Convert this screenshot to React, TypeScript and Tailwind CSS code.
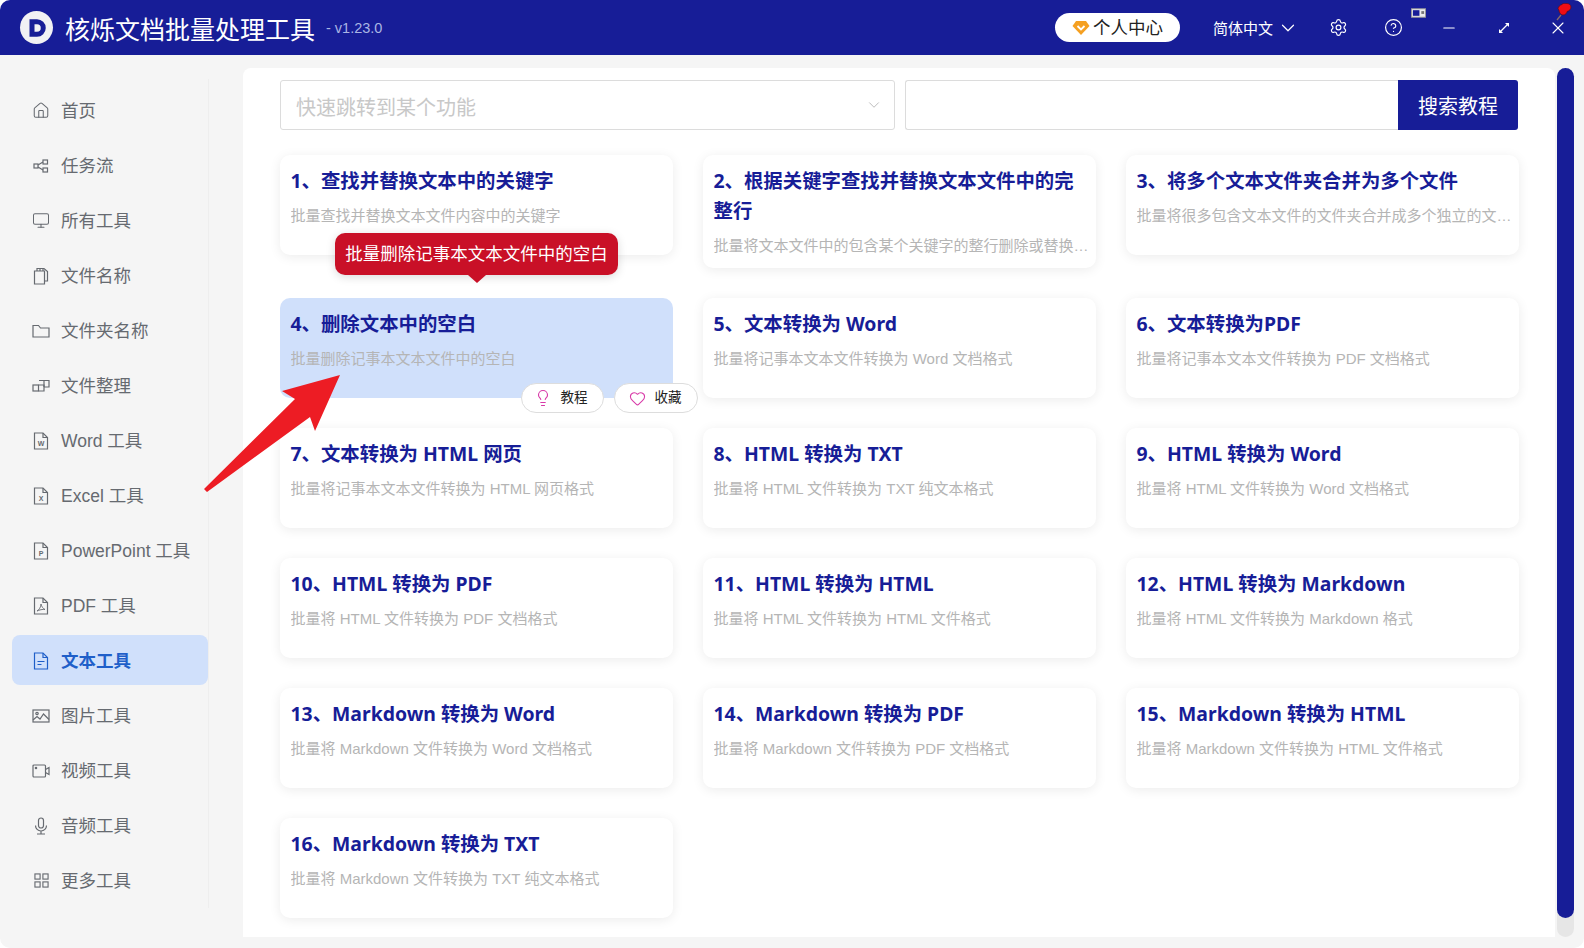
import { ChevronDown, CircleHelp, Heart, House, Lightbulb, Minus, Monitor, Settings, X } from "lucide-react";
import type { ReactNode } from "react";

const font = "font-['Liberation_Sans','Noto_Sans_CJK_SC',sans-serif]";

const DocIcon = ({ children }: { children?: ReactNode }) => (
  <svg viewBox="0 0 16 18" className="h-[18px] w-4" fill="none" stroke="currentColor" strokeWidth="1.2">
    <path d="M1.500 1h8.500l4.500 4.500V17h-13z" />
    <path d="M10 1v4.500h4.500" />
    {children}
  </svg>
);

const Letter = ({ t }: { t: string }) => (
  <text x="8" y="14" fontSize="7" fontWeight="700" textAnchor="middle" fill="currentColor" stroke="none" fontFamily="Liberation Sans">
    {t}
  </text>
);

const svgProps = { fill: "none", stroke: "currentColor", strokeWidth: 1.2 };

const navItems: { label: string; icon: ReactNode; active?: boolean }[] = [
  { label: "首页", icon: <House size={19} strokeWidth={1.4} /> },
  {
    label: "任务流",
    icon: (
      <svg viewBox="0 0 16 14" className="h-[14px] w-4" {...svgProps}>
        <rect x="1" y="5" width="4" height="4" />
        <rect x="10" y="1" width="4.500" height="4" />
        <rect x="10" y="9" width="4.500" height="4" />
        <path d="M5 6l5-3M5 8l5 3" />
      </svg>
    ),
  },
  { label: "所有工具", icon: <Monitor size={19} strokeWidth={1.4} /> },
  {
    label: "文件名称",
    icon: (
      <svg viewBox="0 0 16 18" className="h-[18px] w-4" {...svgProps}>
        <path d="M1.500 4h10v13h-10z" />
        <path d="M4 4V1.500h7l3.500 3V14h-3" />
        <path d="M7 1.500V4M10 1.500V4" />
      </svg>
    ),
  },
  {
    label: "文件夹名称",
    icon: (
      <svg viewBox="0 0 18 14" className="h-[14px] w-[18px]" {...svgProps}>
        <path d="M1 1.500h5.500L8.500 4H17v9H1z" />
      </svg>
    ),
  },
  {
    label: "文件整理",
    icon: (
      <svg viewBox="0 0 18 14" className="h-[14px] w-[18px]" {...svgProps}>
        <path d="M7 1.500h10v6.500h-5" />
        <path d="M12 1.500V8" />
        <rect x="1" y="6" width="5.500" height="6" />
        <path d="M6.500 6H12v6H6.500" />
      </svg>
    ),
  },
  { label: "Word 工具", icon: <DocIcon><Letter t="W" /></DocIcon> },
  { label: "Excel 工具", icon: <DocIcon><Letter t="X" /></DocIcon> },
  { label: "PowerPoint 工具", icon: <DocIcon><Letter t="P" /></DocIcon> },
  {
    label: "PDF 工具",
    icon: (
      <DocIcon>
        <path d="M8 7c0 3-2 6-4 7 2-1 6-2 8-1.500-2-1-3.500-3-4-5.500z" strokeWidth="0.9" />
      </DocIcon>
    ),
  },
  {
    label: "文本工具",
    active: true,
    icon: (
      <DocIcon>
        <path d="M4.500 9.500h7M4.500 12.500h4" />
      </DocIcon>
    ),
  },
  {
    label: "图片工具",
    icon: (
      <svg viewBox="0 0 18 14" className="h-[14px] w-[18px]" {...svgProps}>
        <rect x="1" y="1" width="16" height="12" />
        <circle cx="5" cy="4.500" r="1.200" />
        <path d="M1 11l4-3.500 3 2.500 3.500-5L17 10.500" />
      </svg>
    ),
  },
  {
    label: "视频工具",
    icon: (
      <svg viewBox="0 0 18 14" className="h-[14px] w-[18px]" {...svgProps}>
        <rect x="1" y="1" width="12.500" height="12" rx="1" />
        <path d="M13.500 5.500L17 3.500v7l-3.500-2" />
        <circle cx="4" cy="4" r="0.700" fill="currentColor" />
      </svg>
    ),
  },
  {
    label: "音频工具",
    icon: (
      <svg viewBox="0 0 14 18" className="h-[18px] w-[14px]" {...svgProps}>
        <rect x="4.500" y="1" width="5" height="10" rx="2.500" />
        <path d="M1.500 8.500a5.500 5.500 0 0 0 11 0M7 14v3M3 17h8" />
      </svg>
    ),
  },
  {
    label: "更多工具",
    icon: (
      <svg viewBox="0 0 16 16" className="h-[15px] w-[15px]" {...svgProps}>
        <rect x="1" y="1" width="5.500" height="5.500" />
        <rect x="9.500" y="1" width="5.500" height="5.500" />
        <rect x="1" y="9.500" width="5.500" height="5.500" />
        <rect x="9.500" y="9.500" width="5.500" height="5.500" />
      </svg>
    ),
  },
];

const cards = [
  ["1、查找并替换文本中的关键字", "批量查找并替换文本文件内容中的关键字"],
  ["2、根据关键字查找并替换文本文件中的完整行", "批量将文本文件中的包含某个关键字的整行删除或替换成新的内容的功能"],
  ["3、将多个文本文件夹合并为多个文件", "批量将很多包含文本文件的文件夹合并成多个独立的文本文件的功能"],
  ["4、删除文本中的空白", "批量删除记事本文本文件中的空白"],
  ["5、文本转换为 Word", "批量将记事本文本文件转换为 Word 文档格式"],
  ["6、文本转换为PDF", "批量将记事本文本文件转换为 PDF 文档格式"],
  ["7、文本转换为 HTML 网页", "批量将记事本文本文件转换为 HTML 网页格式"],
  ["8、HTML 转换为 TXT", "批量将 HTML 文件转换为 TXT 纯文本格式"],
  ["9、HTML 转换为 Word", "批量将 HTML 文件转换为 Word 文档格式"],
  ["10、HTML 转换为 PDF", "批量将 HTML 文件转换为 PDF 文档格式"],
  ["11、HTML 转换为 HTML", "批量将 HTML 文件转换为 HTML 文件格式"],
  ["12、HTML 转换为 Markdown", "批量将 HTML 文件转换为 Markdown 格式"],
  ["13、Markdown 转换为 Word", "批量将 Markdown 文件转换为 Word 文档格式"],
  ["14、Markdown 转换为 PDF", "批量将 Markdown 文件转换为 PDF 文档格式"],
  ["15、Markdown 转换为 HTML", "批量将 Markdown 文件转换为 HTML 文件格式"],
  ["16、Markdown 转换为 TXT", "批量将 Markdown 文件转换为 TXT 纯文本格式"],
];

const Card = ({ title, desc, active }: { title: string; desc: string; active: boolean }) => (
  <div className={`relative min-h-[100px] rounded-[10px] pt-[11px] pr-[6px] pb-[11px] pl-[10.5px] ${active ? "bg-[#d0e0fb]" : "bg-white shadow-[0_2px_12px_rgba(0,0,0,0.08)]"}`}>
    <div className="font-['Noto_Sans','Noto_Sans_CJK_SC',sans-serif] text-[19.4px] font-bold leading-[30px] text-[#171d97]">{title}</div>
    <div className="mt-[9px] truncate text-[15px] leading-[22px] text-[#b5b5b5]">{desc}</div>
    {active && (
      <>
        <div className="absolute -top-[65px] left-[55px] flex h-[42px] w-[283px] items-center justify-center rounded-[10px] bg-[#c91027] pt-[1px] text-[17.5px] whitespace-nowrap text-white shadow-[0_2px_10px_rgba(0,0,0,0.15)]">
          批量删除记事本文本文件中的空白
          <span className="absolute -bottom-[8px] left-1/2 -ml-[9px] h-0 w-0 border-x-[9px] border-t-[8px] border-x-transparent border-t-[#c91027]" />
        </div>
        <div className="absolute -bottom-[15px] -right-[25px] flex gap-[10px]">
          <div className="flex h-[30px] w-[83px] items-center justify-center gap-[9px] rounded-full border border-[#dddddd] bg-white pr-[4px] text-[13.5px] text-[#222222]">
            <Lightbulb size={18} strokeWidth={1.5} className="text-[#d83aa8]" />
            <span className="pt-[1px]">教程</span>
          </div>
          <div className="flex h-[30px] w-[84px] items-center justify-center gap-[9px] rounded-full border border-[#dddddd] bg-white pr-[2px] text-[13.5px] text-[#222222]">
            <Heart size={17} strokeWidth={1.5} className="text-[#d83aa8]" />
            <span className="pt-[1px]">收藏</span>
          </div>
        </div>
      </>
    )}
  </div>
);

export default function App() {
  return (
    <div className={`${font} relative flex h-[948px] w-[1584px] flex-col overflow-hidden rounded-[10px] bg-[#f5f5f5]`}>
      <header className="relative flex h-[55px] shrink-0 items-center bg-[#171d97] text-white">
        <div className="ml-5 flex h-[33px] w-[33px] items-center justify-center rounded-full bg-[#f1f1f4]">
          <svg viewBox="0 0 16 16" className="h-[20px] w-[20px]">
            <path d="M2 1h6a7 7 0 0 1 0 14H2zM6 5v6h2a3 3 0 0 0 0-6z" fill="#171d97" fillRule="evenodd" />
          </svg>
        </div>
        <div className="ml-3 pt-[5px] text-[25px] leading-none whitespace-nowrap">核烁文档批量处理工具</div>
        <div className="ml-[11px] pt-[3px] text-[14.5px] text-[#aab6e4]">- v1.23.0</div>
        <div className="ml-auto flex h-[29px] w-[125px] items-center justify-center gap-[3px] rounded-full bg-white text-[17.5px] text-[#222222]">
          <svg viewBox="0 0 18 16" className="h-[16px] w-[18px]">
            <path d="M4 1h10l3.500 5L9 15 .5 6z" fill="#f5a021" />
            <path d="M5.500 6L9 9.500 12.500 6" fill="none" stroke="#fff" strokeWidth="1.800" />
          </svg>
          <span className="pt-[2px]">个人中心</span>
        </div>
        <div className="ml-[33px] pt-[3px] text-[15px] whitespace-nowrap">简体中文</div>
        <ChevronDown size={22} strokeWidth={1.3} className="ml-[4px]" />
        <Settings size={19} strokeWidth={1.5} className="ml-[30px]" />
        <CircleHelp size={19} strokeWidth={1.5} className="ml-[36px]" />
        <Minus size={18} strokeWidth={1.4} className="ml-[37px]" />
        <svg viewBox="0 0 14 14" className="ml-[39px] h-[14px] w-[14px]" fill="none" stroke="#fff" strokeWidth="1.200">
          <path d="M3 11l8-8" />
          <path d="M8 2h4v4M2 8v4h4" fill="#fff" stroke="none" />
        </svg>
        <X size={20} strokeWidth={1.3} className="mr-4 ml-[37px]" />
        <svg viewBox="0 0 16 10" className="absolute top-[8px] left-[1411px] h-[10px] w-[15px]">
          <rect x=".5" y=".5" width="15" height="9" fill="#ececec" stroke="#999999" />
          <rect x="2" y="2" width="7" height="6" fill="#171d97" />
          <rect x="11" y="3" width="3" height="3" fill="#777777" />
        </svg>
        <svg viewBox="0 0 18 18" className="absolute top-[3px] left-[1554px] h-[18px] w-[18px]">
          <path d="M3 17l4-5" stroke="#8a6a6a" strokeWidth="1.300" />
          <path d="M8 1.500c-2 .5-3.500 2-4 4l1 2c0 2 2 4.500 4 4.500 2.500 0 4-2 4-3.500 2.500-.5 4-2.500 4-4.500 0-2-2-3.500-4-3.500-1.500 0-3-.5-5 .500z" fill="#f00d14" stroke="#5a1020" strokeWidth="0.700" />
        </svg>
      </header>

      <div className="flex min-h-0 flex-1 pt-[13px] pb-[11px]">
        <aside className="w-[243px] shrink-0 pt-[11px]">
          <nav className="flex h-[829px] w-[209px] flex-col gap-[5px] border-r border-[#eeeeee] pt-[6px] pl-3">
            {navItems.map((item) => (
              <div
                key={item.label}
                className={`flex h-[50px] w-[196px] shrink-0 items-center rounded-[8px] pl-5 text-[17.5px] whitespace-nowrap ${item.active ? "bg-[#d0e0fb] font-bold text-[#1f5fc9]" : "text-[#666a70]"}`}
              >
                <span className="flex w-[18px] justify-center pt-[1px]">{item.icon}</span>
                <span className="ml-[11px] pt-[2px]">{item.label}</span>
              </div>
            ))}
          </nav>
        </aside>

        <main className="w-[1312px] rounded-t-[8px] bg-white pt-3 pl-[37px]">
          <div className="flex w-[1238px] gap-[10px]">
            <div className="flex h-[50px] w-[615px] items-center justify-between rounded-[3px] border border-[#dcdcdc] pr-[11px] pl-[15px] text-[20px] text-[#c8c8c8]">
              <span className="pt-[5px]">快速跳转到某个功能</span>
              <ChevronDown size={18} strokeWidth={1.2} className="text-[#b5b5b5]" />
            </div>
            <div className="flex h-[50px] flex-1">
              <div className="flex-1 rounded-l-[3px] border border-r-0 border-[#dcdcdc]" />
              <div className="flex w-[120px] items-center justify-center rounded-r-[3px] bg-[#171d97] pt-[4px] text-[20px] text-white">搜索教程</div>
            </div>
          </div>
          <div className="mt-[25px] grid w-[1239px] grid-cols-3 items-start gap-x-[30px] gap-y-[30px]">
            {cards.map(([title, desc], index) => (
              <Card key={title} title={title} desc={desc} active={index === 3} />
            ))}
          </div>
        </main>

        <div className="relative ml-[2px] w-[17px] rounded-full bg-[#e6e6e6]">
          <div className="h-[850px] rounded-full bg-[#171d97]" />
        </div>
      </div>

      <svg viewBox="0 0 1584 948" className="pointer-events-none absolute inset-0 h-[948px] w-[1584px]">
        <path d="M340 375L282 391 295 399 204 489 207 492 310 417 315 431z" fill="#ed1c24" />
      </svg>
    </div>
  );
}
